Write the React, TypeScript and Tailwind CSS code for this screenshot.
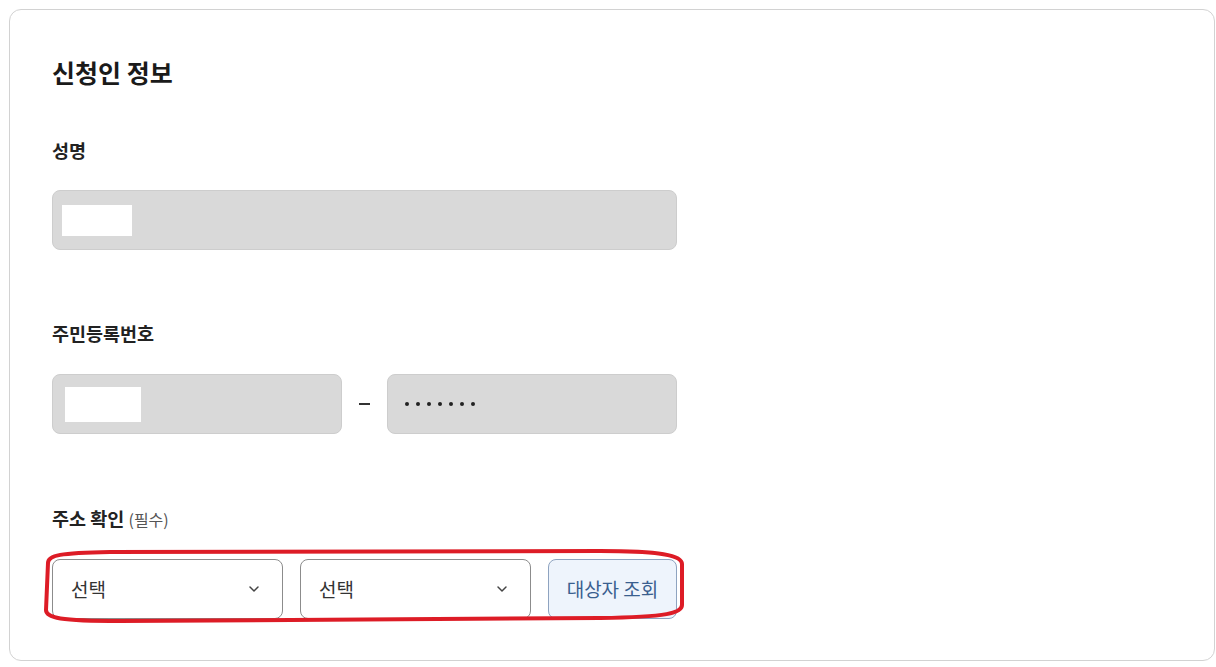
import { ChevronDown } from "lucide-react";

const font = { fontFamily: '"Noto Sans CJK KR", "Noto Sans", sans-serif' };

function GrayInput({ children, className = "" }: { children?: React.ReactNode; className?: string }) {
  return (
    <div className={`h-[60px] rounded-[8px] border border-[#cdcdcd] bg-[#d9d9d9] flex items-center ${className}`}>
      {children}
    </div>
  );
}

function SelectBox() {
  return (
    <div className="w-[231px] h-[60px] rounded-[8px] border border-[#8c8c8c] bg-white flex items-center justify-between pl-[18px] pr-[20px]">
      <span className="text-[19px] text-[#333]">선택</span>
      <ChevronDown className="w-[16px] h-[16px] text-[#444]" strokeWidth={2.2} />
    </div>
  );
}

export default function App() {
  return (
    <div className="min-h-screen bg-white pt-[9px] pl-[9px]" style={font}>
      <div className="w-[1206px] rounded-[12px] border border-[#d2d2d2] pl-[42px] pt-[46px] pb-[41px]">
        <h2 className="text-[25px] leading-[32px] font-bold text-[#1a1a1a]">신청인 정보</h2>

        {/* 성명 */}
        <p className="mt-[50px] text-[18.5px] leading-[24px] font-bold text-[#222]">성명</p>
        <GrayInput className="mt-[28px] w-[625px] pl-[9px]">
          <div className="w-[70px] h-[31px] bg-white" />
        </GrayInput>

        {/* 주민등록번호 */}
        <p className="mt-[71px] text-[18.5px] leading-[24px] font-bold text-[#222]">주민등록번호</p>
        <div className="mt-[29px] flex items-center w-[625px]">
          <GrayInput className="w-[290px] pl-[12px]">
            <div className="w-[76px] h-[35px] bg-white" />
          </GrayInput>
          <div className="w-[45px] flex justify-center">
            <div className="w-[11px] h-[1.5px] bg-[#333]" />
          </div>
          <GrayInput className="w-[290px] pl-[17px] gap-[7px]">
            {[0, 1, 2, 3, 4, 5, 6].map((i) => (
              <span key={i} className="w-[4px] h-[4px] rounded-full bg-[#222]" />
            ))}
          </GrayInput>
        </div>

        {/* 주소 확인 */}
        <p className="mt-[72px] text-[18.5px] leading-[24px] font-bold text-[#222]">
          주소 확인 <span className="text-[16px] font-normal text-[#555]">(필수)</span>
        </p>
        <div className="relative mt-[28px] w-[625px] flex gap-[17px]">
          <SelectBox />
          <SelectBox />
          <button className="w-[129px] h-[60px] rounded-[8px] border border-[#8ea3c0] bg-[#eef4fc] text-[19px] text-[#3a5f8f]">
            대상자 조회
          </button>
          <svg
            className="absolute pointer-events-none"
            style={{ left: -12, top: -12, width: 660, height: 80 }}
            viewBox="0 0 660 80"
            fill="none"
          >
            <path
              d="M 8 16 C 8 8 20 6 70 5 L 560 4 C 620 4 642 8 642 17 L 642 58 C 642 66 628 70 560 71 L 80 74 C 20 74 6 71 6 63 Z"
              stroke="#dd1c26"
              strokeWidth="4"
              strokeLinejoin="round"
            />
          </svg>
        </div>
      </div>
    </div>
  );
}
